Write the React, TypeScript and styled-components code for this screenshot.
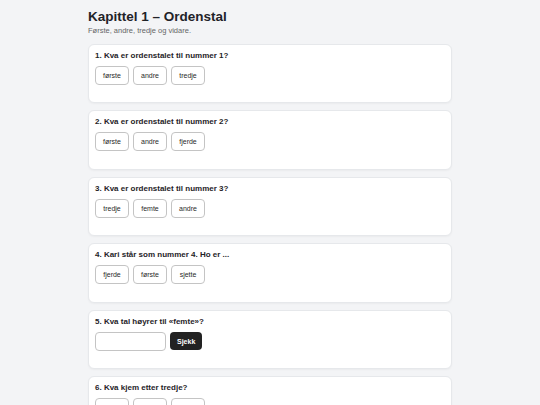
import React from 'react';
import styled, { createGlobalStyle } from "styled-components";

const GlobalStyle = createGlobalStyle`
    body {
        margin: 0;
        background-color: #f3f4f6;
        font-family: "Liberation Sans", Arial, sans-serif;
        color: #1f2328;
    }
`

type QuestionType = {
    text: string
    options?: string[]
    input?: boolean
}

const questions: QuestionType[] = [
    { text: "1. Kva er ordenstalet til nummer 1?", options: ["første", "andre", "tredje"] },
    { text: "2. Kva er ordenstalet til nummer 2?", options: ["første", "andre", "fjerde"] },
    { text: "3. Kva er ordenstalet til nummer 3?", options: ["tredje", "femte", "andre"] },
    { text: "4. Kari står som nummer 4. Ho er ...", options: ["fjerde", "første", "sjette"] },
    { text: "5. Kva tal høyrer til «femte»?", input: true },
    { text: "6. Kva kjem etter tredje?", options: ["andre", "fjerde", "sjette"] },
]

const QuestionCard = (props: QuestionType) => {
    return (
        <Card>
            <QuestionText>{props.text}</QuestionText>
            <Options>
                {props.input ? (
                    <>
                        <AnswerInput type="text" />
                        <CheckButton>Sjekk</CheckButton>
                    </>
                ) : (
                    props.options?.map((o) => <Option key={o}>{o}</Option>)
                )}
            </Options>
            <Feedback />
        </Card>
    );
};

export default function App() {
    return (
        <Page>
            <GlobalStyle />
            <Title>Kapittel 1 – Ordenstal</Title>
            <Subtitle>Første, andre, tredje og vidare.</Subtitle>
            <List>
                {questions.map((q) => (
                    <QuestionCard key={q.text} {...q} />
                ))}
            </List>
        </Page>
    );
}

const Page = styled.div`
    max-width: 364px;
    margin: 0 auto;
    padding-top: 9px;
`

const Title = styled.h1`
    margin: 0;
    font-size: 13.5px;
    line-height: 1.15;
    font-weight: 700;
`

const Subtitle = styled.p`
    margin: 2.5px 0 0;
    font-size: 7.5px;
    line-height: 1.15;
    color: #666;
`

const List = styled.div`
    display: flex;
    flex-direction: column;
    gap: 7px;
    margin-top: 8px;
`

const Card = styled.div`
    background-color: #fff;
    border: 1px solid #e6e8eb;
    border-radius: 6px;
    box-shadow: 0 1px 2px rgba(0, 0, 0, 0.04);
    padding: 6px 6px;
`

const QuestionText = styled.div`
    font-size: 8px;
    font-weight: 700;
    line-height: 10px;
    margin-bottom: 5px;
`

const Options = styled.div`
    display: flex;
    gap: 4px;
    align-items: center;
`

const Option = styled.button`
    height: 19px;
    min-width: 34px;
    padding: 0 7px;
    background-color: #fff;
    border: 1px solid #c4c4c4;
    border-radius: 4px;
    font-family: inherit;
    font-size: 7px;
    color: #2a2a2a;
`

const AnswerInput = styled.input`
    box-sizing: border-box;
    width: 71px;
    height: 19px;
    border: 1px solid #c4c4c4;
    border-radius: 4px;
    background-color: #fff;
    padding: 0 4px;
    font-size: 7px;
`

const CheckButton = styled.button`
    height: 18px;
    padding: 0 7px;
    background-color: #222;
    color: #fff;
    border: none;
    border-radius: 4px;
    font-family: inherit;
    font-size: 7px;
    font-weight: 700;
`

const Feedback = styled.div`
    min-height: 11.5px;
`
